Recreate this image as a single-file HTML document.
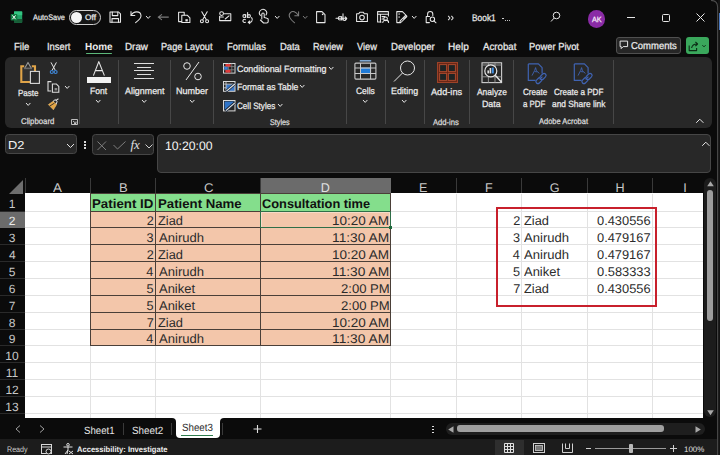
<!DOCTYPE html>
<html><head><meta charset="utf-8"><style>
html,body{margin:0;padding:0;}
body{width:720px;height:455px;overflow:hidden;position:relative;background:#0b0b0b;font-family:"Liberation Sans", sans-serif;}
.a{position:absolute;box-sizing:border-box;}
.t{position:absolute;white-space:nowrap;line-height:1;font-family:"Liberation Sans", sans-serif;transform-origin:0 0;text-rendering:geometricPrecision;}
svg.a{overflow:visible;}
</style></head><body>
<div class="a" style="left:0px;top:0px;width:720px;height:455px;background:#0b0b0b;"></div>
<div class="a" style="left:717px;top:0px;width:3px;height:455px;background:#141414;"></div>
<div class="a" style="left:719px;top:12.5px;width:1px;height:17px;background:#4a78c0;"></div>
<div class="a" style="left:711px;top:0px;width:7px;height:6px;background:#0b0b0b;"></div>
<svg class="a" style="left:0px;top:0px;" width="60" height="40" viewBox="0 0 60 40"><rect x="14" y="11.4" width="8.2" height="11.4" rx="1" fill="#21a366"/><rect x="14" y="11.4" width="8.2" height="3.8" fill="#33c481"/><rect x="14" y="19" width="8.2" height="3.8" fill="#185c37"/><rect x="10.7" y="14" width="6.6" height="6.6" rx="0.8" fill="#107c41"/><path d="M12.4 15.4 L15.6 19.2 M15.6 15.4 L12.4 19.2" stroke="#ffffff" stroke-width="1"/></svg>
<div class="t" style="left:33.30px;top:14px;font-size:8px;color:#e0e0e0;font-weight:400;transform:scaleX(0.9207);-webkit-text-stroke:0.25px #e0e0e0;">AutoSave</div>
<div class="a" style="left:68.9px;top:10.1px;width:31.7px;height:14.8px;border:1.2px solid #cfcfcf;border-radius:8px;background:#161616;"></div>
<div class="a" style="left:71.3px;top:11.9px;width:11px;height:11px;background:#f5f5f5;border-radius:50%;"></div>
<div class="t" style="left:84.83px;top:14px;font-size:8px;color:#ececec;font-weight:400;transform:scaleX(1.0392);-webkit-text-stroke:0.25px #ececec;">Off</div>
<svg class="a" style="left:0;top:0" width="720" height="60" viewBox="0 0 720 60"><path d="M110 12 H118.6 L120.5 13.9 V22.2 H110 Z" stroke="#e8e8e8" stroke-width="1.05" fill="none" stroke-linejoin="round" stroke-linecap="round"/><path d="M112.3 12 V15.6 H117.8 V12" stroke="#e8e8e8" stroke-width="1.05" fill="none" stroke-linejoin="round" stroke-linecap="round"/><path d="M112 22.2 V18.6 H118.5 V22.2" stroke="#e8e8e8" stroke-width="1.05" fill="none" stroke-linejoin="round" stroke-linecap="round"/><path d="M131.2 15.2 C133.5 10.8 140.6 10.6 141 15.6 C141.2 18.6 138.2 20.6 135.6 22.6" stroke="#e8e8e8" stroke-width="1.05" fill="none" stroke-linejoin="round" stroke-linecap="round"/><path d="M131 11.6 V15.4 H134.8" stroke="#e8e8e8" stroke-width="1.05" fill="none" stroke-linejoin="round" stroke-linecap="round"/><path d="M161.6 14.6 L158.2 17.1 L161.6 19.6 M158.2 17.1 H168.4" stroke="#7c7c7c" stroke-width="1.05" fill="none" stroke-linejoin="round" stroke-linecap="round"/><path d="M181.6 21.6 H178.6 V12.2 H184.2 V15" stroke="#e8e8e8" stroke-width="1.05" fill="none" stroke-linejoin="round" stroke-linecap="round"/><path d="M181.8 15.2 H187.2 L189.9 17.9 V22.4 H181.8 Z" stroke="#e8e8e8" stroke-width="1.05" fill="none" stroke-linejoin="round" stroke-linecap="round"/><rect x="185.4" y="19.2" width="2.4" height="2.2" fill="#e8e8e8"/><path d="M201.8 11.8 L206.2 19.6 M207.2 11.8 L202.8 19.6" stroke="#e8e8e8" stroke-width="1.05" fill="none" stroke-linejoin="round" stroke-linecap="round"/><circle cx="201.9" cy="21.3" r="1.5" stroke="#e8e8e8" stroke-width="1.05" fill="none" stroke-linejoin="round" stroke-linecap="round"/><circle cx="207.1" cy="21.3" r="1.5" stroke="#e8e8e8" stroke-width="1.05" fill="none" stroke-linejoin="round" stroke-linecap="round"/><path d="M219.6 16.2 V20.6 H230.8 V13.8 H224.4" stroke="#e8e8e8" stroke-width="1.05" fill="none" stroke-linejoin="round" stroke-linecap="round"/><circle cx="221.6" cy="13.6" r="1.9" stroke="#e8e8e8" stroke-width="1.05" fill="none" stroke-linejoin="round" stroke-linecap="round"/><path d="M219.8 17 H223.4 M225.2 19 L229 15.8" stroke="#e8e8e8" stroke-width="1.05" fill="none" stroke-linejoin="round" stroke-linecap="round"/><circle cx="244.3" cy="16" r="1.4" stroke="#e8e8e8" stroke-width="1.05" fill="none" stroke-linejoin="round" stroke-linecap="round"/><path d="M245.7 14.6 V17.4" stroke="#e8e8e8" stroke-width="1.05" fill="none" stroke-linejoin="round" stroke-linecap="round"/><path d="M247.6 12.4 V17.4" stroke="#e8e8e8" stroke-width="1.05" fill="none" stroke-linejoin="round" stroke-linecap="round"/><circle cx="249" cy="16" r="1.4" stroke="#e8e8e8" stroke-width="1.05" fill="none" stroke-linejoin="round" stroke-linecap="round"/><path d="M245.4 19.6 A1.6 1.6 0 1 0 245.4 22.2" stroke="#e8e8e8" stroke-width="1.05" fill="none" stroke-linejoin="round" stroke-linecap="round"/><path d="M251.6 17.6 A3 3 0 0 1 248.4 22.4 M249.8 21 L248.2 22.4 L249.8 23.6" stroke="#e8e8e8" stroke-width="1.05" fill="none" stroke-linejoin="round" stroke-linecap="round"/><path d="M261.8 19 V14.2 A1.2 1.2 0 0 1 264.2 14.2 V17.6 L267 18.2 A1.4 1.4 0 0 1 268.2 19.6 V21.4 A1.6 1.6 0 0 1 266.6 23 H263.6 L260.4 20" stroke="#e8e8e8" stroke-width="1.05" fill="none" stroke-linejoin="round" stroke-linecap="round"/><path d="M260.4 15.4 A3.6 3.6 0 1 1 266 15" stroke="#e8e8e8" stroke-width="1.05" fill="none" stroke-linejoin="round" stroke-linecap="round"/><path d="M294.6 22.8 C290.4 19.6 287.4 15.6 290.4 12.6 C292.6 10.6 296 11.6 298.4 15.6" stroke="#7c7c7c" stroke-width="1.05" fill="none" stroke-linejoin="round" stroke-linecap="round"/><path d="M298.6 11.8 V15.8 H294.8" stroke="#7c7c7c" stroke-width="1.05" fill="none" stroke-linejoin="round" stroke-linecap="round"/><path d="M316.6 11.6 H322 L325 14.6 V22.6 H316.6 Z" stroke="#e8e8e8" stroke-width="1.05" fill="none" stroke-linejoin="round" stroke-linecap="round"/><rect x="321.9" y="13.6" width="1.5" height="1.5" fill="#e8e8e8"/><path d="M336 18.3 H346.8 M345.2 16.8 L346.8 18.3 L345.2 19.8" stroke="#e8e8e8" stroke-width="1.05" fill="none" stroke-linejoin="round" stroke-linecap="round"/><circle cx="340" cy="18.2" r="1.7" stroke="#e8e8e8" stroke-width="1.05" fill="none" stroke-linejoin="round" stroke-linecap="round"/><path d="M341.7 16.4 V20" stroke="#e8e8e8" stroke-width="1.05" fill="none" stroke-linejoin="round" stroke-linecap="round"/><path d="M343 13.8 V20" stroke="#e8e8e8" stroke-width="1.05" fill="none" stroke-linejoin="round" stroke-linecap="round"/><path d="M343 18.2 A1.7 1.7 0 1 0 346.2 18.2" stroke="#e8e8e8" stroke-width="1.05" fill="none" stroke-linejoin="round" stroke-linecap="round"/><path d="M356.6 13.8 H358.8 L359.8 12.2 H363.4 L364.2 13.8 H367.4 V21.4 H356.6 Z" stroke="#e8e8e8" stroke-width="1.05" fill="none" stroke-linejoin="round" stroke-linecap="round"/><circle cx="362" cy="17.6" r="2.3" stroke="#e8e8e8" stroke-width="1.05" fill="none" stroke-linejoin="round" stroke-linecap="round"/><path d="M381 22 H377.6 V11.6 H388.4 V16" stroke="#e8e8e8" stroke-width="1.05" fill="none" stroke-linejoin="round" stroke-linecap="round"/><path d="M377.6 14.2 H388.4 M380.4 14.2 V22 M382 16.6 H385 M382 19 H383.6" stroke="#e8e8e8" stroke-width="1.05" fill="none" stroke-linejoin="round" stroke-linecap="round"/><circle cx="385.6" cy="18.8" r="1.8" stroke="#e8e8e8" stroke-width="1.05" fill="none" stroke-linejoin="round" stroke-linecap="round"/><path d="M382.8 22.4 A2.8 2.2 0 0 1 388.6 22.4" stroke="#e8e8e8" stroke-width="1.05" fill="none" stroke-linejoin="round" stroke-linecap="round"/><path d="M400.6 22.6 H396.8 V11.6 H402.4 L406.8 16 L403.6 19" stroke="#e8e8e8" stroke-width="1.05" fill="none" stroke-linejoin="round" stroke-linecap="round"/><path d="M406.8 16.6 L401.4 22 L399.8 22.4 L400.2 20.8 L405.6 15.4" stroke="#e8e8e8" stroke-width="1.05" fill="none" stroke-linejoin="round" stroke-linecap="round"/><path d="M398.8 14 H399.6 M398.8 17 H399.6" stroke="#e8e8e8" stroke-width="1.05" fill="none" stroke-linejoin="round" stroke-linecap="round"/><path d="M427.6 16.4 V14 A2.6 2.6 0 0 1 432.8 14 V15.4" stroke="#e8e8e8" stroke-width="1.05" fill="none" stroke-linejoin="round" stroke-linecap="round"/><path d="M429.4 22.6 H426.2 V16.4 H429.6" stroke="#e8e8e8" stroke-width="1.05" fill="none" stroke-linejoin="round" stroke-linecap="round"/><circle cx="432.4" cy="19.2" r="2.2" stroke="#e8e8e8" stroke-width="1.05" fill="none" stroke-linejoin="round" stroke-linecap="round"/><path d="M433.9 20.8 L436 22.8" stroke="#e8e8e8" stroke-width="1.05" fill="none" stroke-linejoin="round" stroke-linecap="round"/><path d="M448.4 16.2 L450 18 L448.4 19.8 M451.6 16.2 L453.2 18 L451.6 19.8" stroke="#e8e8e8" stroke-width="1.05" fill="none" stroke-linejoin="round" stroke-linecap="round"/></svg>
<svg class="a" style="left:144.8px;top:14.8px;" width="6.4" height="4.4" viewBox="0 0 6.4 4.4"><path d="M1 1 L3.2 3.4 L5.4 1" stroke="#e6e6e6" stroke-width="1" fill="none"/></svg>
<svg class="a" style="left:274.2px;top:14.600000000000001px;" width="6.4" height="4.4" viewBox="0 0 6.4 4.4"><path d="M1 1 L3.2 3.4 L5.4 1" stroke="#e6e6e6" stroke-width="1" fill="none"/></svg>
<svg class="a" style="left:302.40000000000003px;top:14.600000000000001px;" width="6.4" height="4.4" viewBox="0 0 6.4 4.4"><path d="M1 1 L3.2 3.4 L5.4 1" stroke="#7a7a7a" stroke-width="1" fill="none"/></svg>
<svg class="a" style="left:410.7px;top:14.600000000000001px;" width="6.4" height="4.4" viewBox="0 0 6.4 4.4"><path d="M1 1 L3.2 3.4 L5.4 1" stroke="#e6e6e6" stroke-width="1" fill="none"/></svg>
<div class="t" style="left:472.03px;top:14px;font-size:9.6px;color:#e6e6e6;font-weight:400;transform:scaleX(0.8725);-webkit-text-stroke:0.25px #e6e6e6;">Book1</div>
<div class="a" style="left:502px;top:17.6px;width:2.2px;height:1px;background:#d0d0d0;"></div>
<div class="a" style="left:505.2px;top:19.8px;width:1.3px;height:1.2px;background:#c0c0c0;"></div>
<div class="a" style="left:507.2px;top:19.8px;width:1.3px;height:1.2px;background:#c0c0c0;"></div>
<div class="a" style="left:509.2px;top:19.8px;width:1.3px;height:1.2px;background:#c0c0c0;"></div>
<svg class="a" style="left:550px;top:11px;" width="11" height="12" viewBox="0 0 11 12"><circle cx="6.5" cy="4.5" r="3.3" stroke="#e6e6e6" stroke-width="1" fill="none"/><path d="M4.2 7 L1 10.5" stroke="#e6e6e6" stroke-width="1" fill="none"/></svg>
<div class="a" style="left:587.5px;top:10.3px;width:17.7px;height:17.7px;border-radius:50%;background:#8a2ba6;"></div>
<div class="t" style="left:591.60px;top:16px;font-size:7.5px;color:#f5e9f8;font-weight:400;transform:scaleX(0.9697);-webkit-text-stroke:0.25px #f5e9f8;">AK</div>
<div class="a" style="left:627px;top:17px;width:8px;height:1px;background:#e6e6e6;"></div>
<div class="a" style="left:662px;top:14px;width:7.5px;height:7.5px;border:1px solid #e6e6e6;border-radius:1.5px;"></div>
<svg class="a" style="left:696px;top:13px;" width="9" height="9" viewBox="0 0 9 9"><path d="M0.5 0.5 L8.5 8.5 M8.5 0.5 L0.5 8.5" stroke="#e6e6e6" stroke-width="1" fill="none"/></svg>
<div class="t" style="left:13.84px;top:43px;font-size:10.2px;color:#ececec;font-weight:400;transform:scaleX(0.9342);-webkit-text-stroke:0.25px #ececec;">File</div>
<div class="t" style="left:47.46px;top:43px;font-size:10.2px;color:#ececec;font-weight:400;transform:scaleX(0.9172);-webkit-text-stroke:0.25px #ececec;">Insert</div>
<div class="t" style="left:85.15px;top:43px;font-size:10.2px;color:#ececec;font-weight:700;transform:scaleX(0.9767);">Home</div>
<div class="t" style="left:124.81px;top:43px;font-size:10.2px;color:#ececec;font-weight:400;transform:scaleX(0.9652);-webkit-text-stroke:0.25px #ececec;">Draw</div>
<div class="t" style="left:160.97px;top:43px;font-size:10.2px;color:#ececec;font-weight:400;transform:scaleX(0.9006);-webkit-text-stroke:0.25px #ececec;">Page Layout</div>
<div class="t" style="left:227.05px;top:43px;font-size:10.2px;color:#ececec;font-weight:400;transform:scaleX(0.9187);-webkit-text-stroke:0.25px #ececec;">Formulas</div>
<div class="t" style="left:279.85px;top:43px;font-size:10.2px;color:#ececec;font-weight:400;transform:scaleX(0.9224);-webkit-text-stroke:0.25px #ececec;">Data</div>
<div class="t" style="left:313.02px;top:43px;font-size:10.2px;color:#ececec;font-weight:400;transform:scaleX(0.8931);-webkit-text-stroke:0.25px #ececec;">Review</div>
<div class="t" style="left:356.95px;top:43px;font-size:10.2px;color:#ececec;font-weight:400;transform:scaleX(0.9141);-webkit-text-stroke:0.25px #ececec;">View</div>
<div class="t" style="left:390.93px;top:43px;font-size:10.2px;color:#ececec;font-weight:400;transform:scaleX(0.9430);-webkit-text-stroke:0.25px #ececec;">Developer</div>
<div class="t" style="left:448.39px;top:43px;font-size:10.2px;color:#ececec;font-weight:400;transform:scaleX(0.9905);-webkit-text-stroke:0.25px #ececec;">Help</div>
<div class="t" style="left:482.50px;top:43px;font-size:10.2px;color:#ececec;font-weight:400;transform:scaleX(0.9490);-webkit-text-stroke:0.25px #ececec;">Acrobat</div>
<div class="t" style="left:529.25px;top:43px;font-size:10.2px;color:#ececec;font-weight:400;transform:scaleX(0.9188);-webkit-text-stroke:0.25px #ececec;">Power Pivot</div>
<div class="a" style="left:85.8px;top:52.6px;width:26.7px;height:1.6px;background:#5cb87a;border-radius:1px;"></div>
<div class="a" style="left:616.2px;top:36.5px;width:64.6px;height:17.3px;border:1px solid #505050;border-radius:3px;background:#262626;"></div>
<svg class="a" style="left:619px;top:40px;" width="10" height="10" viewBox="0 0 10 10"><path d="M1.1 1.1 H8.6 V6.6 H4.2 L2.2 8.6 V6.6 H1.1 Z" stroke="#e6e6e6" stroke-width="1" fill="none" stroke-linejoin="round"/></svg>
<div class="t" style="left:630.73px;top:42px;font-size:10px;color:#ececec;font-weight:400;transform:scaleX(0.9474);-webkit-text-stroke:0.25px #ececec;">Comments</div>
<div class="a" style="left:686.3px;top:37px;width:22.7px;height:16.5px;border-radius:3px;background:#3aa85c;"></div>
<svg class="a" style="left:686.3px;top:37px;" width="23" height="17" viewBox="0 0 23 17"><path d="M3.2 8.6 V13.6 H10.6 V11" stroke="#0c2d16" stroke-width="1.1" fill="none" stroke-linejoin="round"/><path d="M5.6 11 C6.2 8.2 8.2 7 10.8 7 M9.4 5 L11.6 7 L9.4 9" stroke="#0c2d16" stroke-width="1.1" fill="none" stroke-linejoin="round"/><path d="M16.4 8.2 L18 9.8 L19.6 8.2" stroke="#0c2d16" stroke-width="1" fill="none"/></svg>
<div class="a" style="left:5.2px;top:56.5px;width:706.8px;height:71.5px;border-radius:6px;background:#282828;"></div>
<div class="a" style="left:78.8px;top:59.5px;width:1px;height:64.5px;background:#474747;"></div>
<div class="a" style="left:117.7px;top:59.5px;width:1px;height:64.5px;background:#474747;"></div>
<div class="a" style="left:170.2px;top:59.5px;width:1px;height:64.5px;background:#474747;"></div>
<div class="a" style="left:213.0px;top:59.5px;width:1px;height:64.5px;background:#474747;"></div>
<div class="a" style="left:346.0px;top:59.5px;width:1px;height:64.5px;background:#474747;"></div>
<div class="a" style="left:384.6px;top:59.5px;width:1px;height:64.5px;background:#474747;"></div>
<div class="a" style="left:424.1px;top:59.5px;width:1px;height:64.5px;background:#474747;"></div>
<div class="a" style="left:469.0px;top:59.5px;width:1px;height:64.5px;background:#474747;"></div>
<div class="a" style="left:512.9px;top:59.5px;width:1px;height:64.5px;background:#474747;"></div>
<div class="a" style="left:613.0px;top:59.5px;width:1px;height:64.5px;background:#474747;"></div>
<svg class="a" style="left:0;top:0" width="720" height="130" viewBox="0 0 720 130"><rect x="22.2" y="66.8" width="12" height="15" fill="#303030"/><path d="M24.2 66.2 H21.3 V82 H30" stroke="#e0a448" stroke-width="2.1" fill="none"/><path d="M31.8 66.2 H35 V71" stroke="#e0a448" stroke-width="2.1" fill="none"/><path d="M24.6 68.4 L28 62.4 L31.4 68.4" stroke="#9c9c9c" stroke-width="1.1" fill="none" stroke-linejoin="round"/><rect x="24" y="67.6" width="8" height="1.6" fill="#6a6a6a"/><rect x="30.4" y="71.4" width="9" height="12" fill="#2a2a2a" stroke="#d8d8d8" stroke-width="1.1"/><path d="M51 62.4 L55.2 70.2 M56.4 62.4 L52.2 70.2" stroke="#e6e6e6" stroke-width="1" fill="none"/><circle cx="51.8" cy="72" r="1.5" stroke="#3f86d6" stroke-width="1.2" fill="none"/><circle cx="55.6" cy="72" r="1.5" stroke="#3f86d6" stroke-width="1.2" fill="none"/><path d="M51.2 91 H48 V81.6 H51.4" stroke="#dcdcdc" stroke-width="1.1" fill="none"/><path d="M52.4 84 H56.4 L58.8 86.4 V92.2 H52.4 Z" stroke="#dcdcdc" stroke-width="1.1" fill="none"/><rect x="54.6" y="88" width="2.6" height="2.4" fill="#8a8a8a"/><path d="M48.4 104.6 L53.2 101.2 L56.6 104.4 L53.4 109.8 Z" fill="#e3a545" stroke="#f0c070" stroke-width="0.6"/><path d="M49.6 106.2 L54.6 103" stroke="#2a2a2a" stroke-width="0.9"/><path d="M53 101.4 L55.2 99.6 L57.2 101.4 L56.2 104" stroke="#e6e6e6" stroke-width="1" fill="none"/><path d="M55.6 100.6 L58.4 98.8" stroke="#e6e6e6" stroke-width="1.1"/></svg>
<div class="t" style="left:18.06px;top:89px;font-size:8.8px;color:#ececec;font-weight:400;transform:scaleX(0.9119);-webkit-text-stroke:0.25px #ececec;">Paste</div>
<svg class="a" style="left:24.8px;top:101.5px;" width="6.4" height="4.4" viewBox="0 0 6.4 4.4"><path d="M1 1 L3.2 3.4 L5.4 1" stroke="#e6e6e6" stroke-width="1" fill="none"/></svg>
<svg class="a" style="left:63.89999999999999px;top:84.6px;" width="6.4" height="4.4" viewBox="0 0 6.4 4.4"><path d="M1 1 L3.2 3.4 L5.4 1" stroke="#e6e6e6" stroke-width="1" fill="none"/></svg>
<div class="t" style="left:20.81px;top:117px;font-size:8.3px;color:#dcdcdc;font-weight:400;transform:scaleX(0.9401);-webkit-text-stroke:0.25px #dcdcdc;">Clipboard</div>
<svg class="a" style="left:70.5px;top:118.5px;" width="7" height="6" viewBox="0 0 7 6"><path d="M0.5 0.5 H6.5 V5.5 H0.5 Z M2 2 L5 4.5 M5 2.5 V4.5 H3" stroke="#cfcfcf" stroke-width="0.9" fill="none"/></svg>
<svg class="a" style="left:0px;top:0px;" width="720" height="130" viewBox="0 0 720 130"><path d="M93.4 75.6 L98.8 61.6 L104.4 75.6 M95.4 70.6 H102.2" stroke="#e6e6e6" stroke-width="1.1" fill="none" stroke-linejoin="round"/></svg>
<div class="a" style="left:86.7px;top:77.2px;width:23.9px;height:5.5px;background:#f2f2f2;"></div>
<div class="t" style="left:89.91px;top:87px;font-size:9.2px;color:#ececec;font-weight:400;transform:scaleX(0.9309);-webkit-text-stroke:0.25px #ececec;">Font</div>
<svg class="a" style="left:95.3px;top:99.3px;" width="6.4" height="4.4" viewBox="0 0 6.4 4.4"><path d="M1 1 L3.2 3.4 L5.4 1" stroke="#e6e6e6" stroke-width="1" fill="none"/></svg>
<div class="a" style="left:133.9px;top:63.0px;width:20.2px;height:1.1px;background:#dedede;"></div>
<div class="a" style="left:136.9px;top:66.9px;width:14.2px;height:1.0px;background:#dedede;"></div>
<div class="a" style="left:133.9px;top:70.3px;width:20.2px;height:1.1px;background:#dedede;"></div>
<div class="a" style="left:136.9px;top:74.0px;width:14.2px;height:1.0px;background:#dedede;"></div>
<div class="a" style="left:133.9px;top:77.7px;width:20.2px;height:1.1px;background:#dedede;"></div>
<div class="t" style="left:124.60px;top:87px;font-size:9.2px;color:#ececec;font-weight:400;transform:scaleX(0.9670);-webkit-text-stroke:0.25px #ececec;">Alignment</div>
<svg class="a" style="left:140.60000000000002px;top:99.3px;" width="6.4" height="4.4" viewBox="0 0 6.4 4.4"><path d="M1 1 L3.2 3.4 L5.4 1" stroke="#e6e6e6" stroke-width="1" fill="none"/></svg>
<svg class="a" style="left:182px;top:61px;" width="21" height="20" viewBox="0 0 21 20"><path d="M17 1 L4 19" stroke="#e6e6e6" stroke-width="1" fill="none"/><circle cx="5" cy="5" r="3.3" stroke="#e6e6e6" stroke-width="1" fill="none"/><circle cx="16" cy="15.5" r="3.3" stroke="#e6e6e6" stroke-width="1" fill="none"/></svg>
<div class="t" style="left:175.88px;top:87px;font-size:9.2px;color:#ececec;font-weight:400;transform:scaleX(0.9833);-webkit-text-stroke:0.25px #ececec;">Number</div>
<svg class="a" style="left:188.8px;top:99.3px;" width="6.4" height="4.4" viewBox="0 0 6.4 4.4"><path d="M1 1 L3.2 3.4 L5.4 1" stroke="#e6e6e6" stroke-width="1" fill="none"/></svg>
<svg class="a" style="left:223px;top:62.6px;" width="13" height="12" viewBox="0 0 13 12"><rect x="0.5" y="0.5" width="11.5" height="9.6" fill="#202020" stroke="#d8d8d8" stroke-width="1"/><path d="M0.5 3.6 H12 M0.5 6.8 H12 M5.6 0.5 V10.1 M8.8 0.5 V10.1" stroke="#8a8a8a" stroke-width="0.8"/><rect x="2.4" y="1" width="5.2" height="2.6" fill="#e03a3a"/><rect x="1.2" y="3.8" width="3.6" height="2.8" fill="#3a7fd6"/><rect x="2.4" y="7" width="5.2" height="2.6" fill="#e03a3a"/></svg>
<div class="t" style="left:236.75px;top:65px;font-size:9.2px;color:#ececec;font-weight:400;transform:scaleX(0.9684);-webkit-text-stroke:0.25px #ececec;">Conditional Formatting</div>
<svg class="a" style="left:327.8px;top:66.0px;" width="6.4" height="4.4" viewBox="0 0 6.4 4.4"><path d="M1 1 L3.2 3.4 L5.4 1" stroke="#e6e6e6" stroke-width="1" fill="none"/></svg>
<svg class="a" style="left:223px;top:81.2px;" width="13" height="12" viewBox="0 0 13 12"><rect x="3" y="3.3" width="8.8" height="6.8" fill="#3a78c8"/><rect x="0.5" y="0.5" width="11.5" height="9.8" fill="none" stroke="#d8d8d8" stroke-width="1"/><path d="M0.5 3.1 H12 M0.5 6.8 H3 M3 0.5 V10.3" stroke="#d8d8d8" stroke-width="0.8"/><path d="M3 10.6 L12 2.8" stroke="#1a2a40" stroke-width="2.6"/><path d="M3.4 10.2 L11.8 3" stroke="#e8e8e8" stroke-width="1.1"/></svg>
<div class="t" style="left:236.51px;top:83px;font-size:9.2px;color:#ececec;font-weight:400;transform:scaleX(0.9330);-webkit-text-stroke:0.25px #ececec;">Format as Table</div>
<svg class="a" style="left:299.0px;top:84.2px;" width="6.4" height="4.4" viewBox="0 0 6.4 4.4"><path d="M1 1 L3.2 3.4 L5.4 1" stroke="#e6e6e6" stroke-width="1" fill="none"/></svg>
<svg class="a" style="left:223px;top:99.9px;" width="13" height="12" viewBox="0 0 13 12"><path d="M1.6 1.6 H11.2 L1.6 10 Z" fill="#2f74c8"/><rect x="0.5" y="0.5" width="11.5" height="10.4" fill="none" stroke="#d8d8d8" stroke-width="1"/><path d="M2.6 11 L12 2.6" stroke="#1a2a40" stroke-width="2.6"/><path d="M3 10.6 L11.8 2.8" stroke="#e8e8e8" stroke-width="1.1"/></svg>
<div class="t" style="left:237.19px;top:102px;font-size:9.2px;color:#ececec;font-weight:400;transform:scaleX(0.8808);-webkit-text-stroke:0.25px #ececec;">Cell Styles</div>
<svg class="a" style="left:276.6px;top:103.0px;" width="6.4" height="4.4" viewBox="0 0 6.4 4.4"><path d="M1 1 L3.2 3.4 L5.4 1" stroke="#e6e6e6" stroke-width="1" fill="none"/></svg>
<div class="t" style="left:269.98px;top:118px;font-size:8.3px;color:#dcdcdc;font-weight:400;transform:scaleX(0.8700);-webkit-text-stroke:0.25px #dcdcdc;">Styles</div>
<svg class="a" style="left:354px;top:59px;" width="23" height="22" viewBox="0 0 23 22"><path d="M5.8 1.8 H17.2" stroke="#8ab8e8" stroke-width="1.4"/><rect x="6.5" y="9" width="10" height="5.5" fill="#1f7ad6" stroke="#7fb4ea" stroke-width="0.8"/><rect x="0.9" y="4.1" width="21" height="16" rx="1" fill="none" stroke="#c8c8c8" stroke-width="1.1"/><path d="M0.9 9 H22 M0.9 14.5 H22 M6.5 4.1 V20.1 M16.6 4.1 V20.1" stroke="#c8c8c8" stroke-width="1"/></svg>
<div class="t" style="left:356.08px;top:87px;font-size:9.2px;color:#ececec;font-weight:400;transform:scaleX(0.9193);-webkit-text-stroke:0.25px #ececec;">Cells</div>
<svg class="a" style="left:362.1px;top:99.1px;" width="6.4" height="4.4" viewBox="0 0 6.4 4.4"><path d="M1 1 L3.2 3.4 L5.4 1" stroke="#e6e6e6" stroke-width="1" fill="none"/></svg>
<svg class="a" style="left:393px;top:60px;" width="23" height="23" viewBox="0 0 23 23"><circle cx="14.5" cy="8" r="7" stroke="#e6e6e6" stroke-width="1" fill="none"/><path d="M9.5 13 L1 21.5" stroke="#e6e6e6" stroke-width="1" fill="none"/></svg>
<div class="t" style="left:390.89px;top:87px;font-size:9.2px;color:#ececec;font-weight:400;transform:scaleX(0.9637);-webkit-text-stroke:0.25px #ececec;">Editing</div>
<svg class="a" style="left:401.0px;top:99.1px;" width="6.4" height="4.4" viewBox="0 0 6.4 4.4"><path d="M1 1 L3.2 3.4 L5.4 1" stroke="#e6e6e6" stroke-width="1" fill="none"/></svg>
<svg class="a" style="left:436.7px;top:62px;" width="21" height="21" viewBox="0 0 21 21"><rect x="0" y="0" width="21" height="21" fill="#6a2616"/><rect x="0.5" y="0.5" width="20" height="20" fill="none" stroke="#9c4228" stroke-width="1"/><rect x="2.6" y="2.6" width="7" height="7" fill="#1e2424" stroke="#a84a2e" stroke-width="1"/><rect x="11.4" y="2.6" width="7" height="7" fill="#1e2424" stroke="#a84a2e" stroke-width="1"/><rect x="2.6" y="11.4" width="7" height="7" fill="#1e2424" stroke="#a84a2e" stroke-width="1"/><rect x="11.4" y="11.4" width="7" height="7" fill="#1e2424" stroke="#a84a2e" stroke-width="1"/></svg>
<div class="t" style="left:431.40px;top:88px;font-size:9.2px;color:#ececec;font-weight:400;transform:scaleX(0.9979);-webkit-text-stroke:0.25px #ececec;">Add-ins</div>
<div class="t" style="left:433.40px;top:118px;font-size:8.3px;color:#dcdcdc;font-weight:400;transform:scaleX(0.9193);-webkit-text-stroke:0.25px #dcdcdc;">Add-ins</div>
<svg class="a" style="left:0px;top:0px;" width="720" height="130" viewBox="0 0 720 130"><rect x="482" y="62.8" width="19.6" height="19.8" fill="none" stroke="#cfcfcf" stroke-width="1.1"/><path d="M482 65 H501.6 M482 76.8 H501.6 M488.4 62.8 V82.6 M495 62.8 V82.6" stroke="#9a9a9a" stroke-width="0.9"/><circle cx="490.8" cy="70.9" r="6" fill="#232323" stroke="#e6e6e6" stroke-width="1.2"/><path d="M495.2 75.3 L501.6 82.2" stroke="#e6e6e6" stroke-width="1.4"/><rect x="487.4" y="70.4" width="1.6" height="3" fill="#e0e0e0"/><rect x="489.6" y="68" width="1.6" height="5.4" fill="#e0e0e0"/><rect x="491.8" y="67.6" width="2" height="5.8" fill="#3f8ee0"/></svg>
<div class="t" style="left:476.80px;top:88px;font-size:9px;color:#ececec;font-weight:400;transform:scaleX(0.9370);-webkit-text-stroke:0.25px #ececec;">Analyze</div>
<div class="t" style="left:481.89px;top:100px;font-size:9px;color:#ececec;font-weight:400;transform:scaleX(0.9797);-webkit-text-stroke:0.25px #ececec;">Data</div>
<svg class="a" style="left:527px;top:63px;" width="21" height="22" viewBox="0 0 21 22"><path d="M1.3 0.9 H11.4 L15.1 4.6 V10.6 M1.3 0.9 V17.4 H8.6" stroke="#3f63b2" stroke-width="1.2" fill="none" stroke-linejoin="round"/><path d="M5 12.6 L7.6 7.6 L8.6 4.6 L9.4 7.8 L12.4 10.4 M7.6 8.6 L10.2 8.8" stroke="#3f63b2" stroke-width="0.9" fill="none"/><rect x="10" y="14" width="4" height="7" rx="2" transform="rotate(45 12 17.5)" fill="#282828" stroke="#3f63b2" stroke-width="1.2"/><rect x="14" y="10" width="4" height="7" rx="2" transform="rotate(45 16 13.5)" fill="#282828" stroke="#3f63b2" stroke-width="1.2"/><path d="M12.6 16.4 L15.4 13.6" stroke="#3f63b2" stroke-width="1.2"/></svg>
<svg class="a" style="left:572.5px;top:63px;" width="21" height="22" viewBox="0 0 21 22"><path d="M1.3 0.9 H11.4 L15.1 4.6 V10.6 M1.3 0.9 V17.4 H8.6" stroke="#3f63b2" stroke-width="1.2" fill="none" stroke-linejoin="round"/><path d="M5 12.6 L7.6 7.6 L8.6 4.6 L9.4 7.8 L12.4 10.4 M7.6 8.6 L10.2 8.8" stroke="#3f63b2" stroke-width="0.9" fill="none"/><rect x="10" y="14" width="4" height="7" rx="2" transform="rotate(45 12 17.5)" fill="#282828" stroke="#3f63b2" stroke-width="1.2"/><rect x="14" y="10" width="4" height="7" rx="2" transform="rotate(45 16 13.5)" fill="#282828" stroke="#3f63b2" stroke-width="1.2"/><path d="M12.6 16.4 L15.4 13.6" stroke="#3f63b2" stroke-width="1.2"/></svg>
<div class="t" style="left:522.50px;top:88px;font-size:9px;color:#ececec;font-weight:400;transform:scaleX(0.8988);-webkit-text-stroke:0.25px #ececec;">Create</div>
<div class="t" style="left:523.18px;top:100px;font-size:9px;color:#ececec;font-weight:400;transform:scaleX(0.8752);-webkit-text-stroke:0.25px #ececec;">a PDF</div>
<div class="t" style="left:554.20px;top:88px;font-size:9px;color:#ececec;font-weight:400;transform:scaleX(0.8963);-webkit-text-stroke:0.25px #ececec;">Create a PDF</div>
<div class="t" style="left:552.27px;top:100px;font-size:9px;color:#ececec;font-weight:400;transform:scaleX(0.9284);-webkit-text-stroke:0.25px #ececec;">and Share link</div>
<div class="t" style="left:538.60px;top:118px;font-size:8.2px;color:#dcdcdc;font-weight:400;transform:scaleX(0.9116);-webkit-text-stroke:0.25px #dcdcdc;">Adobe Acrobat</div>
<svg class="a" style="left:695px;top:117.8px;" width="10" height="6" viewBox="0 0 10 6"><path d="M1.2 4.8 L4.8 1.2 L8.4 4.8" stroke="#e6e6e6" stroke-width="1" fill="none"/></svg>
<div class="a" style="left:4.9px;top:134.3px;width:72.6px;height:20.1px;border:1px solid #464646;border-radius:3.5px;background:#282828;"></div>
<div class="t" style="left:7.57px;top:141px;font-size:11.5px;color:#f4f4f4;font-weight:400;transform:scaleX(1.1164);">D2</div>
<svg class="a" style="left:66px;top:142.5px;" width="9" height="6" viewBox="0 0 9 6"><path d="M1 1 L4.5 4.5 L8 1" stroke="#e6e6e6" stroke-width="1" fill="none"/></svg>
<div class="a" style="left:84.3px;top:141.2px;width:1.5px;height:1.5px;background:#d8d8d8;"></div>
<div class="a" style="left:84.3px;top:144.2px;width:1.5px;height:1.5px;background:#d8d8d8;"></div>
<div class="a" style="left:84.3px;top:147.2px;width:1.5px;height:1.5px;background:#d8d8d8;"></div>
<div class="a" style="left:92.3px;top:134.3px;width:61.5px;height:20.4px;border:1px solid #464646;border-radius:3.5px;background:#242424;"></div>
<svg class="a" style="left:97px;top:140.5px;" width="10" height="10" viewBox="0 0 10 10"><path d="M0.5 0.5 L9 9 M9 0.5 L0.5 9" stroke="#7e7e7e" stroke-width="1" fill="none"/></svg>
<svg class="a" style="left:113px;top:141px;" width="13" height="9" viewBox="0 0 13 9"><path d="M0.5 4 L4.5 8 L12.5 0.5" stroke="#7e7e7e" stroke-width="1" fill="none"/></svg>
<div class="t" style="left:130.5px;top:137.5px;font-family:'Liberation Serif',serif;font-style:italic;font-size:13px;color:#e0e0e0;">fx</div>
<svg class="a" style="left:145px;top:144px;" width="8" height="5" viewBox="0 0 8 5"><path d="M0.5 0.5 L4 4 L7.5 0.5" stroke="#cfcfcf" stroke-width="1" fill="none"/></svg>
<div class="a" style="left:156.9px;top:134.3px;width:554.5px;height:38.5px;border:1px solid #464646;border-radius:4px;background:#282828;"></div>
<div class="t" style="left:165.33px;top:140px;font-size:12.3px;color:#f4f4f4;font-weight:400;transform:scaleX(0.9948);">10:20:00</div>
<svg class="a" style="left:700.5px;top:140.5px;" width="10" height="6" viewBox="0 0 10 6"><path d="M1.2 4.8 L4.8 1.2 L8.4 4.8" stroke="#e6e6e6" stroke-width="1" fill="none"/></svg>
<div class="a" style="left:25px;top:193px;width:678.2px;height:224.5px;background:#ffffff;"></div>
<div class="a" style="left:25px;top:211px;width:678.2px;height:1px;background:#e2e2e2;"></div>
<div class="a" style="left:25px;top:227px;width:678.2px;height:1px;background:#e2e2e2;"></div>
<div class="a" style="left:25px;top:244px;width:678.2px;height:1px;background:#e2e2e2;"></div>
<div class="a" style="left:25px;top:261px;width:678.2px;height:1px;background:#e2e2e2;"></div>
<div class="a" style="left:25px;top:278px;width:678.2px;height:1px;background:#e2e2e2;"></div>
<div class="a" style="left:25px;top:295px;width:678.2px;height:1px;background:#e2e2e2;"></div>
<div class="a" style="left:25px;top:312px;width:678.2px;height:1px;background:#e2e2e2;"></div>
<div class="a" style="left:25px;top:329px;width:678.2px;height:1px;background:#e2e2e2;"></div>
<div class="a" style="left:25px;top:345px;width:678.2px;height:1px;background:#e2e2e2;"></div>
<div class="a" style="left:25px;top:362px;width:678.2px;height:1px;background:#e2e2e2;"></div>
<div class="a" style="left:25px;top:379px;width:678.2px;height:1px;background:#e2e2e2;"></div>
<div class="a" style="left:25px;top:396px;width:678.2px;height:1px;background:#e2e2e2;"></div>
<div class="a" style="left:25px;top:413px;width:678.2px;height:1px;background:#e2e2e2;"></div>
<div class="a" style="left:90.0px;top:194px;width:1px;height:223.5px;background:#e2e2e2;"></div>
<div class="a" style="left:155.0px;top:194px;width:1px;height:223.5px;background:#e2e2e2;"></div>
<div class="a" style="left:260.0px;top:194px;width:1px;height:223.5px;background:#e2e2e2;"></div>
<div class="a" style="left:390.0px;top:194px;width:1px;height:223.5px;background:#e2e2e2;"></div>
<div class="a" style="left:456.0px;top:194px;width:1px;height:223.5px;background:#e2e2e2;"></div>
<div class="a" style="left:521.0px;top:194px;width:1px;height:223.5px;background:#e2e2e2;"></div>
<div class="a" style="left:587.0px;top:194px;width:1px;height:223.5px;background:#e2e2e2;"></div>
<div class="a" style="left:652.0px;top:194px;width:1px;height:223.5px;background:#e2e2e2;"></div>
<div class="a" style="left:24.5px;top:178px;width:1px;height:15px;background:#3a3a3a;"></div>
<div class="a" style="left:90.0px;top:178px;width:1px;height:15px;background:#3a3a3a;"></div>
<div class="a" style="left:155.0px;top:178px;width:1px;height:15px;background:#3a3a3a;"></div>
<div class="a" style="left:260.0px;top:178px;width:1px;height:15px;background:#3a3a3a;"></div>
<div class="a" style="left:390.0px;top:178px;width:1px;height:15px;background:#3a3a3a;"></div>
<div class="a" style="left:456.0px;top:178px;width:1px;height:15px;background:#3a3a3a;"></div>
<div class="a" style="left:521.0px;top:178px;width:1px;height:15px;background:#3a3a3a;"></div>
<div class="a" style="left:587.0px;top:178px;width:1px;height:15px;background:#3a3a3a;"></div>
<div class="a" style="left:652.0px;top:178px;width:1px;height:15px;background:#3a3a3a;"></div>
<div class="a" style="left:260.5px;top:178px;width:130px;height:15.3px;background:#6b6b6b;"></div>
<div class="a" style="left:0px;top:211px;width:25px;height:1px;background:#2a2a2a;"></div>
<div class="a" style="left:0px;top:227px;width:25px;height:1px;background:#2a2a2a;"></div>
<div class="a" style="left:0px;top:244px;width:25px;height:1px;background:#2a2a2a;"></div>
<div class="a" style="left:0px;top:261px;width:25px;height:1px;background:#2a2a2a;"></div>
<div class="a" style="left:0px;top:278px;width:25px;height:1px;background:#2a2a2a;"></div>
<div class="a" style="left:0px;top:295px;width:25px;height:1px;background:#2a2a2a;"></div>
<div class="a" style="left:0px;top:312px;width:25px;height:1px;background:#2a2a2a;"></div>
<div class="a" style="left:0px;top:329px;width:25px;height:1px;background:#2a2a2a;"></div>
<div class="a" style="left:0px;top:345px;width:25px;height:1px;background:#2a2a2a;"></div>
<div class="a" style="left:0px;top:362px;width:25px;height:1px;background:#2a2a2a;"></div>
<div class="a" style="left:0px;top:379px;width:25px;height:1px;background:#2a2a2a;"></div>
<div class="a" style="left:0px;top:396px;width:25px;height:1px;background:#2a2a2a;"></div>
<div class="a" style="left:0px;top:413px;width:25px;height:1px;background:#2a2a2a;"></div>
<div class="a" style="left:0px;top:211.5px;width:25px;height:16px;background:#6b6b6b;"></div>
<svg class="a" style="left:9px;top:179.5px;" width="15" height="14" viewBox="0 0 15 14"><path d="M14 0 V14 H0 Z" fill="#6e6e6e"/></svg>
<div class="t" style="left:53.30px;top:182px;font-size:12.6px;color:#c8c8c8;font-weight:400;transform:scaleX(1.0622);">A</div>
<div class="t" style="left:119.45px;top:182px;font-size:12.6px;color:#c8c8c8;font-weight:400;transform:scaleX(1.0384);">B</div>
<div class="t" style="left:203.74px;top:182px;font-size:12.6px;color:#c8c8c8;font-weight:400;transform:scaleX(1.0499);">C</div>
<div class="t" style="left:320.74px;top:182px;font-size:12.6px;color:#e0e0e0;font-weight:400;transform:scaleX(1.0000);">D</div>
<div class="t" style="left:419.06px;top:182px;font-size:12.6px;color:#c8c8c8;font-weight:400;transform:scaleX(1.0000);">E</div>
<div class="t" style="left:484.91px;top:182px;font-size:12.6px;color:#c8c8c8;font-weight:400;transform:scaleX(1.0000);">F</div>
<div class="t" style="left:549.74px;top:182px;font-size:12.6px;color:#c8c8c8;font-weight:400;transform:scaleX(1.0000);">G</div>
<div class="t" style="left:615.46px;top:182px;font-size:12.6px;color:#c8c8c8;font-weight:400;transform:scaleX(1.0000);">H</div>
<div class="t" style="left:683.27px;top:182px;font-size:12.6px;color:#c8c8c8;font-weight:400;transform:scaleX(1.0000);">I</div>
<div class="t" style="left:8.69px;top:198px;font-size:12px;color:#c8c8c8;font-weight:400;transform:scaleX(1.0000);">1</div>
<div class="t" style="left:8.87px;top:215px;font-size:12px;color:#ececec;font-weight:400;transform:scaleX(1.0000);">2</div>
<div class="t" style="left:8.87px;top:232px;font-size:12px;color:#c8c8c8;font-weight:400;transform:scaleX(1.0000);">3</div>
<div class="t" style="left:8.90px;top:249px;font-size:12px;color:#c8c8c8;font-weight:400;transform:scaleX(1.0000);">4</div>
<div class="t" style="left:8.87px;top:266px;font-size:12px;color:#c8c8c8;font-weight:400;transform:scaleX(1.0000);">5</div>
<div class="t" style="left:8.81px;top:283px;font-size:12px;color:#c8c8c8;font-weight:400;transform:scaleX(1.0000);">6</div>
<div class="t" style="left:8.87px;top:300px;font-size:12px;color:#c8c8c8;font-weight:400;transform:scaleX(1.0000);">7</div>
<div class="t" style="left:8.84px;top:317px;font-size:12px;color:#c8c8c8;font-weight:400;transform:scaleX(1.0000);">8</div>
<div class="t" style="left:8.87px;top:333px;font-size:12px;color:#c8c8c8;font-weight:400;transform:scaleX(1.0000);">9</div>
<div class="t" style="left:5.30px;top:350px;font-size:12px;color:#c8c8c8;font-weight:400;transform:scaleX(1.0000);">10</div>
<div class="t" style="left:5.81px;top:367px;font-size:12px;color:#c8c8c8;font-weight:400;transform:scaleX(1.0000);">11</div>
<div class="t" style="left:5.39px;top:384px;font-size:12px;color:#c8c8c8;font-weight:400;transform:scaleX(1.0000);">12</div>
<div class="t" style="left:5.33px;top:401px;font-size:12px;color:#c8c8c8;font-weight:400;transform:scaleX(1.0000);">13</div>
<div class="a" style="left:90.5px;top:193.5px;width:300px;height:17.5px;background:#84de8c;"></div>
<div class="a" style="left:90.5px;top:212px;width:300px;height:133px;background:#f3c6aa;"></div>
<div class="a" style="left:90px;top:193px;width:301px;height:1px;background:#4a3f38;"></div>
<div class="a" style="left:90px;top:211px;width:301px;height:1px;background:#4a3f38;"></div>
<div class="a" style="left:90px;top:227px;width:301px;height:1px;background:#4a3f38;"></div>
<div class="a" style="left:90px;top:244px;width:301px;height:1px;background:#4a3f38;"></div>
<div class="a" style="left:90px;top:261px;width:301px;height:1px;background:#4a3f38;"></div>
<div class="a" style="left:90px;top:278px;width:301px;height:1px;background:#4a3f38;"></div>
<div class="a" style="left:90px;top:295px;width:301px;height:1px;background:#4a3f38;"></div>
<div class="a" style="left:90px;top:312px;width:301px;height:1px;background:#4a3f38;"></div>
<div class="a" style="left:90px;top:329px;width:301px;height:1px;background:#4a3f38;"></div>
<div class="a" style="left:90px;top:345px;width:301px;height:1px;background:#4a3f38;"></div>
<div class="a" style="left:90.0px;top:193px;width:1px;height:153px;background:#4a3f38;"></div>
<div class="a" style="left:155.0px;top:193px;width:1px;height:153px;background:#4a3f38;"></div>
<div class="a" style="left:260.0px;top:193px;width:1px;height:153px;background:#4a3f38;"></div>
<div class="a" style="left:390.0px;top:193px;width:1px;height:153px;background:#4a3f38;"></div>
<div class="t" style="left:91.63px;top:198px;font-size:12.7px;color:#111;font-weight:700;transform:scaleX(1.0487);">Patient ID</div>
<div class="t" style="left:157.64px;top:198px;font-size:12.7px;color:#111;font-weight:700;transform:scaleX(1.0410);">Patient Name</div>
<div class="t" style="left:262.29px;top:198px;font-size:12.7px;color:#111;font-weight:700;transform:scaleX(1.0088);">Consultation time</div>
<div class="t" style="left:146.69px;top:215px;font-size:12.7px;color:#2b2b2b;font-weight:400;transform:scaleX(1.0000);">2</div>
<div class="t" style="left:158.11px;top:215px;font-size:12.7px;color:#2b2b2b;font-weight:400;transform:scaleX(1.0130);">Ziad</div>
<div class="t" style="left:332.39px;top:215px;font-size:12.7px;color:#2b2b2b;font-weight:400;transform:scaleX(1.0654);">10:20 AM</div>
<div class="t" style="left:146.56px;top:232px;font-size:12.7px;color:#2b2b2b;font-weight:400;transform:scaleX(1.0000);">3</div>
<div class="t" style="left:158.50px;top:232px;font-size:12.7px;color:#2b2b2b;font-weight:400;transform:scaleX(1.0297);">Anirudh</div>
<div class="t" style="left:332.37px;top:232px;font-size:12.7px;color:#2b2b2b;font-weight:400;transform:scaleX(1.0840);">11:30 AM</div>
<div class="t" style="left:146.69px;top:249px;font-size:12.7px;color:#2b2b2b;font-weight:400;transform:scaleX(1.0000);">2</div>
<div class="t" style="left:158.11px;top:249px;font-size:12.7px;color:#2b2b2b;font-weight:400;transform:scaleX(1.0130);">Ziad</div>
<div class="t" style="left:332.39px;top:249px;font-size:12.7px;color:#2b2b2b;font-weight:400;transform:scaleX(1.0654);">10:20 AM</div>
<div class="t" style="left:146.37px;top:266px;font-size:12.7px;color:#2b2b2b;font-weight:400;transform:scaleX(1.0000);">4</div>
<div class="t" style="left:158.50px;top:266px;font-size:12.7px;color:#2b2b2b;font-weight:400;transform:scaleX(1.0297);">Anirudh</div>
<div class="t" style="left:332.37px;top:266px;font-size:12.7px;color:#2b2b2b;font-weight:400;transform:scaleX(1.0840);">11:30 AM</div>
<div class="t" style="left:146.56px;top:283px;font-size:12.7px;color:#2b2b2b;font-weight:400;transform:scaleX(1.0000);">5</div>
<div class="t" style="left:158.50px;top:283px;font-size:12.7px;color:#2b2b2b;font-weight:400;transform:scaleX(1.0205);">Aniket</div>
<div class="t" style="left:340.75px;top:283px;font-size:12.7px;color:#2b2b2b;font-weight:400;transform:scaleX(1.0309);">2:00 PM</div>
<div class="t" style="left:146.56px;top:300px;font-size:12.7px;color:#2b2b2b;font-weight:400;transform:scaleX(1.0000);">5</div>
<div class="t" style="left:158.50px;top:300px;font-size:12.7px;color:#2b2b2b;font-weight:400;transform:scaleX(1.0205);">Aniket</div>
<div class="t" style="left:340.75px;top:300px;font-size:12.7px;color:#2b2b2b;font-weight:400;transform:scaleX(1.0309);">2:00 PM</div>
<div class="t" style="left:146.69px;top:317px;font-size:12.7px;color:#2b2b2b;font-weight:400;transform:scaleX(1.0000);">7</div>
<div class="t" style="left:158.11px;top:317px;font-size:12.7px;color:#2b2b2b;font-weight:400;transform:scaleX(1.0130);">Ziad</div>
<div class="t" style="left:332.39px;top:317px;font-size:12.7px;color:#2b2b2b;font-weight:400;transform:scaleX(1.0654);">10:20 AM</div>
<div class="t" style="left:146.37px;top:333px;font-size:12.7px;color:#2b2b2b;font-weight:400;transform:scaleX(1.0000);">4</div>
<div class="t" style="left:158.50px;top:333px;font-size:12.7px;color:#2b2b2b;font-weight:400;transform:scaleX(1.0297);">Anirudh</div>
<div class="t" style="left:332.37px;top:333px;font-size:12.7px;color:#2b2b2b;font-weight:400;transform:scaleX(1.0840);">11:30 AM</div>
<div class="a" style="left:260px;top:211px;width:131px;height:17px;border:1px solid #2f6e48;"></div>
<div class="a" style="left:261px;top:212px;width:129px;height:15px;border:1px solid rgba(255,255,255,0.35);border-bottom:none;"></div>
<div class="a" style="left:389px;top:226px;width:3px;height:3px;background:#1e6b3c;"></div>
<div class="a" style="left:496.2px;top:207.2px;width:160.8px;height:99.6px;border:2.2px solid #c8202c;"></div>
<div class="t" style="left:513.19px;top:215px;font-size:12.7px;color:#2b2b2b;font-weight:400;transform:scaleX(1.0000);">2</div>
<div class="t" style="left:524.01px;top:215px;font-size:12.7px;color:#2b2b2b;font-weight:400;transform:scaleX(1.0130);">Ziad</div>
<div class="t" style="left:597.09px;top:215px;font-size:12.7px;color:#2b2b2b;font-weight:400;transform:scaleX(1.0126);">0.430556</div>
<div class="t" style="left:513.06px;top:232px;font-size:12.7px;color:#2b2b2b;font-weight:400;transform:scaleX(1.0000);">3</div>
<div class="t" style="left:524.40px;top:232px;font-size:12.7px;color:#2b2b2b;font-weight:400;transform:scaleX(1.0297);">Anirudh</div>
<div class="t" style="left:597.29px;top:232px;font-size:12.7px;color:#2b2b2b;font-weight:400;transform:scaleX(1.0113);">0.479167</div>
<div class="t" style="left:512.87px;top:249px;font-size:12.7px;color:#2b2b2b;font-weight:400;transform:scaleX(1.0000);">4</div>
<div class="t" style="left:524.40px;top:249px;font-size:12.7px;color:#2b2b2b;font-weight:400;transform:scaleX(1.0297);">Anirudh</div>
<div class="t" style="left:597.29px;top:249px;font-size:12.7px;color:#2b2b2b;font-weight:400;transform:scaleX(1.0113);">0.479167</div>
<div class="t" style="left:513.06px;top:266px;font-size:12.7px;color:#2b2b2b;font-weight:400;transform:scaleX(1.0000);">5</div>
<div class="t" style="left:524.40px;top:266px;font-size:12.7px;color:#2b2b2b;font-weight:400;transform:scaleX(1.0205);">Aniket</div>
<div class="t" style="left:596.98px;top:266px;font-size:12.7px;color:#2b2b2b;font-weight:400;transform:scaleX(1.0146);">0.583333</div>
<div class="t" style="left:513.19px;top:283px;font-size:12.7px;color:#2b2b2b;font-weight:400;transform:scaleX(1.0000);">7</div>
<div class="t" style="left:524.01px;top:283px;font-size:12.7px;color:#2b2b2b;font-weight:400;transform:scaleX(1.0130);">Ziad</div>
<div class="t" style="left:597.09px;top:283px;font-size:12.7px;color:#2b2b2b;font-weight:400;transform:scaleX(1.0126);">0.430556</div>
<div class="a" style="left:704.3px;top:178.2px;width:11.5px;height:239.3px;background:#1c1c1c;border-radius:6px;"></div>
<svg class="a" style="left:707px;top:181px;" width="7" height="6" viewBox="0 0 7 6"><path d="M3.5 0.3 L6.8 5.3 H0.2 Z" fill="#a8a8a8"/></svg>
<div class="a" style="left:707.4px;top:189.8px;width:5.9px;height:131.6px;background:#9c9c9c;border-radius:3px;"></div>
<svg class="a" style="left:707px;top:410px;" width="7" height="6" viewBox="0 0 7 6"><path d="M3.5 5.3 L6.8 0.3 H0.2 Z" fill="#a8a8a8"/></svg>
<div class="a" style="left:171.5px;top:417.0px;width:52px;height:5px;background:#ffffff;"></div>
<div class="a" style="left:0;top:417.5px;width:175.7px;height:21.70px;background:#0b0b0b;border-top-right-radius:4px;"></div>
<div class="a" style="left:219.7px;top:417.5px;width:497.5px;height:21.70px;background:#0b0b0b;border-top-left-radius:4px;"></div>
<svg class="a" style="left:15px;top:424.5px;" width="6" height="8" viewBox="0 0 6 8"><path d="M5 0.5 L1 4 L5 7.5" stroke="#a0a0a0" stroke-width="1" fill="none"/></svg>
<svg class="a" style="left:39px;top:424.5px;" width="6" height="8" viewBox="0 0 6 8"><path d="M1 0.5 L5 4 L1 7.5" stroke="#a0a0a0" stroke-width="1" fill="none"/></svg>
<div class="t" style="left:84.47px;top:426px;font-size:10.5px;color:#e6e6e6;font-weight:400;transform:scaleX(0.9184);">Sheet1</div>
<div class="a" style="left:122.7px;top:422.9px;width:1px;height:12.2px;background:#3a3a3a;"></div>
<div class="t" style="left:132.46px;top:426px;font-size:10.5px;color:#e6e6e6;font-weight:400;transform:scaleX(0.9384);">Sheet2</div>
<div class="a" style="left:171px;top:422.9px;width:1px;height:12.2px;background:#3a3a3a;"></div>
<div class="a" style="left:175.7px;top:416.5px;width:44px;height:21.70px;background:#fff;border-radius:0 0 4px 4px;"></div>
<div class="t" style="left:181.66px;top:423px;font-size:10.5px;color:#2e2e2e;font-weight:400;transform:scaleX(0.9292);">Sheet3</div>
<div class="a" style="left:181.1px;top:434.5px;width:32.1px;height:1.5px;background:#2f7d4e;"></div>
<div class="a" style="left:221.5px;top:422.9px;width:1px;height:12.2px;background:#3a3a3a;"></div>
<svg class="a" style="left:252.5px;top:424.5px;" width="9" height="9" viewBox="0 0 9 9"><path d="M4.5 0 V8 M0.5 4 H8.5" stroke="#e0e0e0" stroke-width="1.1" fill="none"/></svg>
<div class="a" style="left:432.2px;top:425.5px;width:1.6px;height:1.6px;background:#e0e0e0;"></div>
<div class="a" style="left:432.2px;top:428.5px;width:1.6px;height:1.6px;background:#e0e0e0;"></div>
<div class="a" style="left:432.2px;top:431.5px;width:1.6px;height:1.6px;background:#e0e0e0;"></div>
<div class="a" style="left:445.6px;top:423.1px;width:259px;height:12.2px;background:#1e1e1e;border-radius:6px;"></div>
<svg class="a" style="left:447.5px;top:425.5px;" width="6" height="7" viewBox="0 0 6 7"><path d="M0.2 3.5 L5.5 0.2 V6.8 Z" fill="#a8a8a8"/></svg>
<div class="a" style="left:456.7px;top:425.3px;width:207px;height:6.3px;background:#a0a0a0;border-radius:3px;"></div>
<svg class="a" style="left:695px;top:425.5px;" width="6" height="7" viewBox="0 0 6 7"><path d="M5.8 3.5 L0.5 0.2 V6.8 Z" fill="#a8a8a8"/></svg>
<div class="a" style="left:0px;top:439.2px;width:717.2px;height:15.800000000000011px;background:#1c1c1c;"></div>
<div class="t" style="left:6.93px;top:446px;font-size:8px;color:#cfcfcf;font-weight:400;transform:scaleX(0.8897);">Ready</div>
<svg class="a" style="left:41px;top:443.5px;" width="12" height="11" viewBox="0 0 12 11"><rect x="0.5" y="0.5" width="10" height="9" fill="none" stroke="#d8d8d8" stroke-width="1"/><path d="M0.5 3 H10.5" stroke="#d8d8d8"/><circle cx="7.5" cy="7.5" r="2.5" fill="#1c1c1c" stroke="#d8d8d8" stroke-width="1"/></svg>
<svg class="a" style="left:63px;top:442.5px;" width="11" height="12" viewBox="0 0 11 12"><circle cx="5" cy="1.8" r="1.3" stroke="#e0e0e0" fill="none"/><path d="M0.5 4 H9.5 M5 4 V7 L2 11 M5 7 L4 11 M6 8 L10 11 M10 8 L6 11" stroke="#e0e0e0" stroke-width="1" fill="none"/></svg>
<div class="t" style="left:76.81px;top:446px;font-size:8px;color:#f0f0f0;font-weight:700;transform:scaleX(0.9458);">Accessibility: Investigate</div>
<div class="a" style="left:494.5px;top:440.3px;width:29px;height:14.7px;background:#2e2e2e;"></div>
<svg class="a" style="left:504px;top:443px;" width="10" height="10" viewBox="0 0 10 10"><path d="M0.5 0.5 H9.5 V9.5 H0.5 Z M3.5 0.5 V9.5 M6.5 0.5 V9.5 M0.5 3.5 H9.5 M0.5 6.5 H9.5" stroke="#e0e0e0" stroke-width="1" fill="none"/></svg>
<svg class="a" style="left:532.5px;top:443px;" width="12" height="10" viewBox="0 0 12 10"><rect x="0.5" y="0.5" width="11" height="9" fill="none" stroke="#d0d0d0"/><rect x="2.5" y="2.5" width="7" height="5" fill="#777" stroke="#d0d0d0" stroke-width="0.8"/></svg>
<svg class="a" style="left:561.5px;top:443px;" width="11" height="10" viewBox="0 0 11 10"><path d="M0.5 0.5 V9.5 H10.5 V0.5 M3.5 0.5 V5.5 H7.5 V0.5" stroke="#d0d0d0" stroke-width="1" fill="none"/></svg>
<div class="a" style="left:586px;top:448.2px;width:5px;height:1px;background:#cfcfcf;"></div>
<div class="a" style="left:594.8px;top:448.2px;width:70.8px;height:1px;background:#9a9a9a;"></div>
<div class="a" style="left:628.6px;top:444px;width:4.7px;height:9px;background:#b8b8b8;border-radius:1px;"></div>
<svg class="a" style="left:670px;top:445px;" width="7" height="7" viewBox="0 0 7 7"><path d="M3.5 0 V7 M0 3.5 H7" stroke="#cfcfcf" stroke-width="1" fill="none"/></svg>
<div class="t" style="left:684.40px;top:446px;font-size:8px;color:#e0e0e0;font-weight:400;transform:scaleX(0.9949);">100%</div>
<svg class="a" style="left:0px;top:0px;" width="720" height="455" viewBox="0 0 720 455"><path d="M711 0.4 Q717.6 0.4 717.6 7 V455" stroke="#4a4a4a" stroke-width="1.1" fill="none"/></svg>
</body></html>
